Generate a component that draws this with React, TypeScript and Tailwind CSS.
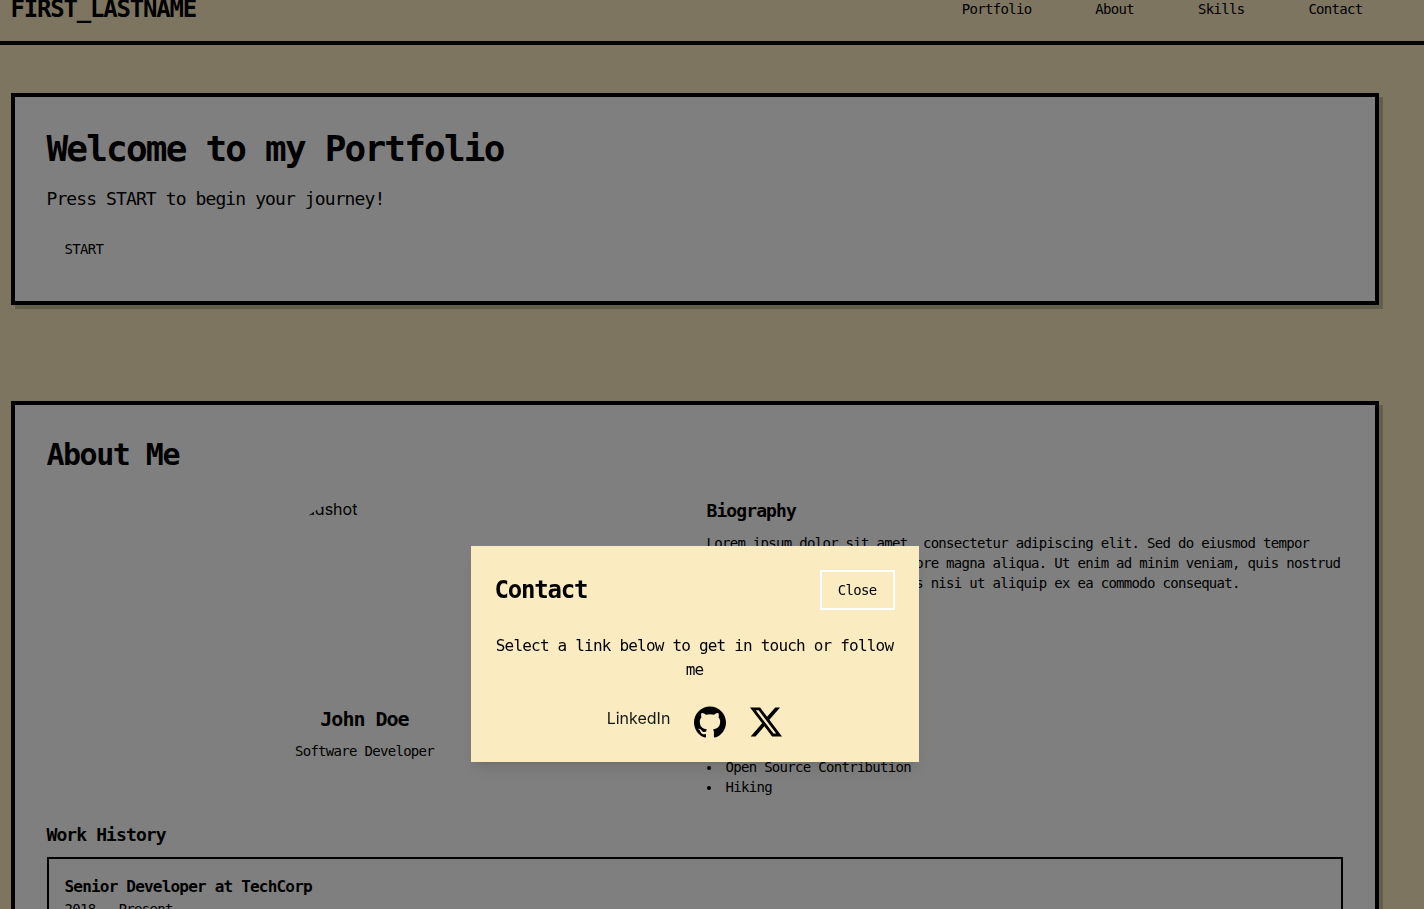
import React from 'react';
import { SiGithub, SiX } from 'react-icons/si';

const navItems = ['Portfolio', 'About', 'Skills', 'Contact'];
const interests = ['Open Source Contribution', 'Hiking'];

function Panel({ children }: { children: React.ReactNode }) {
  return (
    <section className="border-4 border-black bg-white p-8 shadow-[4px_4px_0_rgba(0,0,0,0.2)]">
      {children}
    </section>
  );
}

export default function App() {
  return (
    <div className="h-screen overflow-hidden bg-[#fbebc1] font-['DejaVu_Sans_Mono',monospace] text-sm tracking-tighter text-black">
      <header className="-mt-[23px] border-b-4 border-black py-4 pr-[35px]">
        <div className="mx-auto flex max-w-[1368px] items-center justify-between">
          <div className="text-2xl font-bold tracking-tighter">FIRST_LASTNAME</div>
          <nav className="flex gap-8">
            {navItems.map((item) => (
              <a key={item} href={`#${item.toLowerCase()}`} className="px-4">
                {item}
              </a>
            ))}
          </nav>
        </div>
      </header>

      <main className="py-12 pr-[35px]">
        <div className="mx-auto flex max-w-[1368px] flex-col gap-24">
          <Panel>
            <h1 className="mb-4 text-4xl font-bold tracking-tighter">Welcome to my Portfolio</h1>
            <p className="mb-4 text-lg/7 tracking-tighter">Press START to begin your journey!</p>
            <button type="button" className="h-10 border-2 border-transparent px-4">
              START
            </button>
          </Panel>

          <Panel>
            <h2 className="mb-6 text-3xl font-bold tracking-tighter">About Me</h2>
            <div className="mb-6 grid grid-cols-2 gap-6">
              <div className="flex flex-col items-center">
                <div className="mb-4 size-48 overflow-hidden rounded-full pl-4 font-[Inter,sans-serif] text-base tracking-normal">
                  Headshot
                </div>
                <h3 className="mb-2 text-xl/7 font-bold tracking-tighter">John Doe</h3>
                <p>Software Developer</p>
              </div>
              <div>
                <h3 className="mb-2 text-lg/7 font-bold tracking-tighter">Biography</h3>
                <p>
                  Lorem ipsum dolor sit amet, consectetur adipiscing elit. Sed do eiusmod tempor incididunt ut labore et
                  dolore magna aliqua. Ut enim ad minim veniam, quis nostrud exercitation ullamco laboris nisi ut
                  aliquip ex ea commodo consequat.
                </p>
                <ul className="mt-41 list-inside list-disc">
                  {interests.map((interest) => (
                    <li key={interest}>{interest}</li>
                  ))}
                </ul>
              </div>
            </div>
            <h3 className="mb-2 text-lg/7 font-bold tracking-tighter">Work History</h3>
            <article className="border-2 border-black p-4">
              <h4 className="text-base font-bold tracking-tighter">Senior Developer at TechCorp</h4>
              <p>2018 - Present</p>
            </article>
          </Panel>
        </div>
      </main>

      <div className="fixed inset-0 flex items-start justify-center bg-black/50 pt-[546px] pr-[35px]">
        <div
          role="dialog"
          aria-modal="true"
          aria-labelledby="contact-title"
          className="w-full max-w-md bg-[#fbebc1] p-6 shadow-lg"
        >
          <div className="mb-6 flex items-center justify-between">
            <h2 id="contact-title" className="text-2xl font-bold tracking-tighter">
              Contact
            </h2>
            <button type="button" className="h-10 border-2 border-white px-4">
              Close
            </button>
          </div>
          <p className="mb-6 text-center text-base tracking-tighter">Select a link below to get in touch or follow me</p>
          <div className="flex items-start justify-center gap-6">
            <a href="#linkedin" className="font-[Inter,sans-serif] text-base tracking-normal text-neutral-900">
              LinkedIn
            </a>
            <a href="#github" aria-label="GitHub">
              <SiGithub className="size-8" aria-hidden="true" />
            </a>
            <a href="#x" aria-label="X">
              <SiX className="size-8" aria-hidden="true" />
            </a>
          </div>
        </div>
      </div>
    </div>
  );
}
